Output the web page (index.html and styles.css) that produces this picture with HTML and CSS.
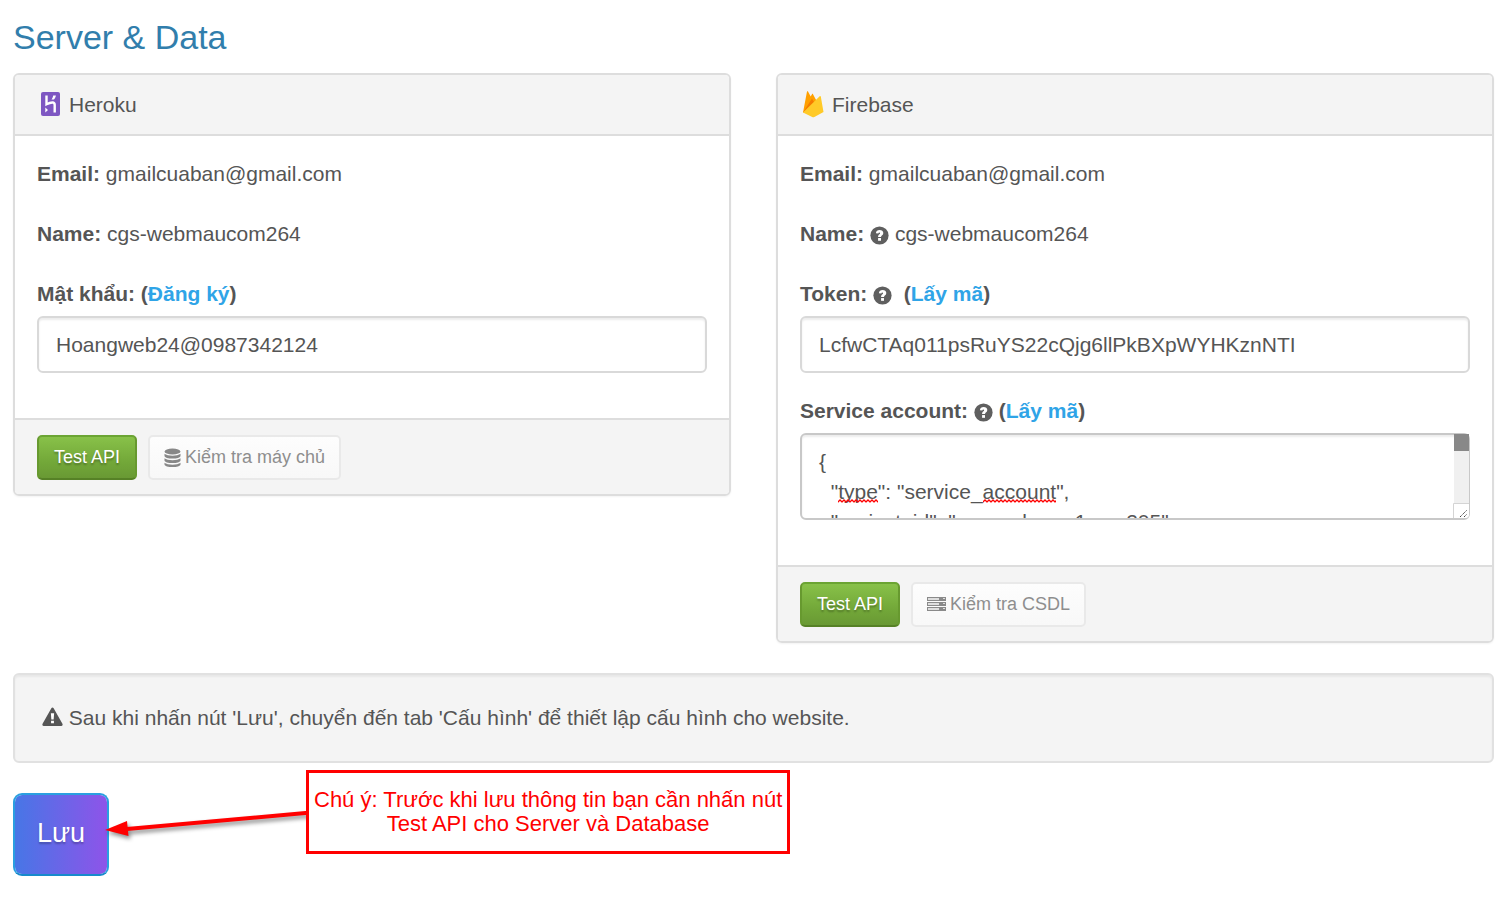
FILE: index.html
```html
<!DOCTYPE html>
<html lang="vi">
<head>
<meta charset="utf-8">
<title>Server &amp; Data</title>
<link rel="stylesheet" href="styles.css">
</head>
<body>
<svg class="sprite" aria-hidden="true">
  <symbol id="help" viewBox="0 0 20 20">
    <circle cx="10" cy="10" r="9.6" fill="#5f5f5f"/>
    <path d="M6.200 7.600C6.400 5.300 8 4.200 10.100 4.200c2.200 0 3.900 1.200 3.900 3.200 0 2.500-2.400 2.600-2.400 4.300H8.500c0-2.700 2.100-2.800 2.100-4 0-.5-.3-.8-.8-.8-.6 0-.9.400-1 1.100z" fill="#fff"/>
    <path d="M8.500 12.700h3.100v2.900H8.500z" fill="#fff"/>
  </symbol>
  <pattern id="squiggle" width="4" height="4" patternUnits="userSpaceOnUse">
    <path d="M-1 3.500L0 3L2 1L4 3L5 3.500" fill="none" stroke="#f00" stroke-width="1.300"/>
  </pattern>
</svg>
<form class="page">
  <h1 class="title">Server &amp; Data</h1>
  <div class="columns">
    <section class="panel">
      <header class="panel-head">
        <svg class="brand" viewBox="0 1 26 28" aria-hidden="true">
          <rect x="4" y="2" width="19" height="24" rx="2" fill="#7e57c2"/>
          <path d="M9.500 5.500V14.300C12 13 14 12.200 16 12.500c1.300.2 1.700 1 1.700 2.500v7.500" fill="none" stroke="#fff" stroke-width="2.400"/>
          <path d="M8.300 17.500v5l2.700-2.500zM16.200 5.500h2.700c-.2 1.500-.8 2.700-1.900 4h-2.500c1-1.200 1.500-2.500 1.700-4z" fill="#fff"/>
        </svg>
        <h2 class="panel-name">Heroku</h2>
      </header>
      <div class="panel-body">
        <p class="row"><b>Email:</b> gmailcuaban@gmail.com</p>
        <p class="row"><b>Name:</b> cgs-webmaucom264</p>
        <div class="field">
          <div class="label"><label for="password">Mật khẩu:</label> (<a href="#signup">Đăng ký</a>)</div>
          <input class="control" id="password" type="text" value="Hoangweb24@0987342124">
        </div>
      </div>
      <footer class="panel-foot">
        <button class="btn btn-green" type="button">Test API</button>
        <button class="btn btn-plain" type="button">
          <svg class="icon-db" viewBox="0 0 17 20" aria-hidden="true">
            <ellipse cx="8.500" cy="3.500" rx="8" ry="3"/>
            <path d="M.5 5.700c3 2.600 13 2.600 16 0v2.200c0 3.400-16 3.400-16 0zM.5 10.200c3 2.600 13 2.600 16 0v2.200c0 3.400-16 3.400-16 0zM.5 14.700c3 2.600 13 2.600 16 0v1.800c0 3.400-16 3.400-16 0z"/>
          </svg>Kiểm tra máy chủ</button>
      </footer>
    </section>

    <section class="panel">
      <header class="panel-head">
        <svg class="brand" viewBox="0 1 26 28" aria-hidden="true">
          <path d="M3 22.500L7 1.500c.1-.5.800-.5 1 0l2.700 5 1.300-2.300c.3-.5.800-.5 1 0l8 15z" fill="#ffa000"/>
          <path d="M3 22.500L12 8.500l3 5.500z" fill="#f57c00"/>
          <path d="M3 22.500L19.700 6.300c.4-.4 1-.2 1.100.3L23.500 22l-9.100 5c-.7.400-1.500.400-2.200 0z" fill="#ffca28"/>
        </svg>
        <h2 class="panel-name">Firebase</h2>
      </header>
      <div class="panel-body">
        <p class="row"><b>Email:</b> gmailcuaban@gmail.com</p>
        <p class="row"><b>Name:</b> <svg class="help" aria-hidden="true"><use href="#help"/></svg> cgs-webmaucom264</p>
        <div class="field">
          <div class="label"><label for="token">Token:</label> <svg class="help" aria-hidden="true"><use href="#help"/></svg>&nbsp; (<a href="#token">Lấy mã</a>)</div>
          <input class="control" id="token" type="text" value="LcfwCTAq011psRuYS22cQjg6llPkBXpWYHKznNTI">
        </div>
        <div class="field">
          <div class="label"><label for="account">Service account:</label> <svg class="help" aria-hidden="true"><use href="#help"/></svg> (<a href="#account">Lấy mã</a>)</div>
          <div class="area">
            <textarea class="control control-area" id="account" spellcheck="false">{
  "type": "service_account",
  "project_id": "cgs-webmau1com205"
}</textarea>
            <svg class="wave wave-type" aria-hidden="true"><rect width="100%" height="4" fill="url(#squiggle)"/></svg>
            <svg class="wave wave-account" aria-hidden="true"><rect width="100%" height="4" fill="url(#squiggle)"/></svg>
            <div class="scroll" aria-hidden="true">
              <div class="scroll-thumb"></div>
              <svg class="scroll-grip" viewBox="0 0 16 15">
                <path d="M.5 15V.5H16" fill="none" stroke="#d4d4d4"/>
                <path d="M7 14L14 7M11 14l3-3" stroke="#444" stroke-dasharray="1.400 .6"/>
              </svg>
            </div>
          </div>
        </div>
      </div>
      <footer class="panel-foot">
        <button class="btn btn-green" type="button">Test API</button>
        <button class="btn btn-plain" type="button">
          <svg class="icon-server" viewBox="0 0 19 18" aria-hidden="true">
            <path d="M0 1h19v4H0zM0 6h19v4H0zM0 11h19v4H0z"/>
            <path d="M1 2h11v2H1zM1 7h11v2H1zM1 12h11v2H1zM16 2h2v1h-2zM16 7h2v1h-2zM16 12h2v1h-2z" fill="#ddd"/>
          </svg>Kiểm tra CSDL</button>
      </footer>
    </section>
  </div>

  <div class="well">
    <svg class="icon-warn" viewBox="0 0 22 20" aria-hidden="true">
      <path d="M9.800.8c.6-1 1.800-1 2.400 0l9.200 16.400c.6 1.100 0 2.300-1.200 2.300H1.800C.6 19.500 0 18.300.600 17.200z" fill="#555"/>
      <path d="M9.300 6h3.400l-.5 6.500H9.800zM9.500 13.800h3v2.700h-3z" fill="#fff"/>
    </svg>
    Sau khi nhấn nút 'Lưu', chuyển đến tab 'Cấu hình' để thiết lập cấu hình cho website.
  </div>

  <div class="actions">
    <button class="save" type="submit">Lưu</button>
    <svg class="arrow" viewBox="0 0 206 40" aria-hidden="true">
      <path d="M206 9.500L22 26" stroke="#f00" stroke-width="4"/>
      <path d="M0 27L22 18L23.500 33z" fill="#f00"/>
    </svg>
    <div class="note">Chú ý: Trước khi lưu thông tin bạn cần nhấn nút<br>Test API cho Server và Database</div>
  </div>
</form>
</body>
</html>
```
FILE: styles.css
```css
* {
  box-sizing: border-box;
}

body {
  margin: 0;
  background: #fff;
  color: #555;
  font: 21px/30px "Liberation Sans", Arial, sans-serif;
}

.sprite {
  position: absolute;
  width: 0;
  height: 0;
}

.page {
  padding: 15px 8px 20px 13px;
}

.title {
  margin: 0 0 14px;
  color: #317eac;
  font-size: 34px;
  font-weight: 400;
  line-height: 44px;
}

a {
  color: #2fa4e7;
  text-decoration: none;
}

.columns {
  display: grid;
  grid-template-columns: 1fr 1fr;
  gap: 45px;
  align-items: start;
  margin-bottom: 30px;
}

.panel {
  border: 2px solid #ddd;
  border-radius: 6px;
  box-shadow: 0 1px 2px rgba(0, 0, 0, 0.05);
  overflow: hidden;
}

.panel-head {
  display: flex;
  align-items: center;
  gap: 6px;
  padding: 15px 22px 14px;
  border-bottom: 2px solid #ddd;
  background: #f4f4f4;
}

.brand {
  width: 26px;
  height: 28px;
  overflow: visible;
}

.panel-name {
  margin: 0;
  font-size: 21px;
  font-weight: 400;
}

.panel-body {
  padding: 23px 22px 22px;
}

.row {
  margin: 0 0 30px;
}

.field {
  margin-bottom: 23px;
}

.label {
  margin-bottom: 7px;
  font-weight: 700;
}

.help {
  width: 19px;
  height: 19px;
  vertical-align: -4px;
}

.control {
  display: block;
  width: 100%;
  height: 57px;
  padding: 12px 17px;
  border: 2px solid #d9d9d9;
  border-radius: 6px;
  background: #fff;
  box-shadow: inset 0 2px 2px rgba(0, 0, 0, 0.075);
  color: #555;
  font: inherit;
}

.area {
  position: relative;
}

.control-area {
  height: 87px;
  border-color: #c8c8c8;
  resize: none;
  scrollbar-width: none;
}

.wave {
  position: absolute;
  top: 66px;
  height: 4px;
  pointer-events: none;
}

.wave-type {
  left: 38px;
  width: 40px;
}

.wave-account {
  left: 183px;
  width: 73px;
}

.scroll {
  position: absolute;
  top: 1px;
  right: 1px;
  bottom: 2px;
  display: flex;
  flex-direction: column;
  justify-content: space-between;
  width: 15px;
  border-radius: 0 5px 4px 0;
  background: #f0f0f0;
}

.scroll-thumb {
  height: 17px;
  background: #888;
}

.scroll-grip {
  width: 16px;
  height: 15px;
  margin-left: -1px;
  border-radius: 0 0 4px 0;
  background: #fff;
}

.panel-foot {
  display: flex;
  gap: 11px;
  padding: 15px 22px 14px;
  border-top: 2px solid #ddd;
  background: #f4f4f4;
}

.btn {
  display: flex;
  align-items: center;
  height: 45px;
  padding: 0 15px;
  border: 2px solid;
  border-radius: 5px;
  font: 18px/27px "Liberation Sans", Arial, sans-serif;
}

.btn-green {
  border-color: #6ba433 #67992f #568126;
  background: linear-gradient(#88c149, #73a839 60%, #699934);
  color: #fff;
  text-shadow: 0 2px 2px rgba(0, 0, 0, 0.3);
}

.btn-plain {
  gap: 4px;
  padding: 0 14px;
  border-color: #e9e9e9;
  background: linear-gradient(#fdfdfd, #f8f8f8);
  color: #8e8e8e;
}

.icon-db {
  width: 17px;
  height: 20px;
  fill: #888;
}

.icon-server {
  width: 19px;
  height: 18px;
  fill: #8a8a8a;
}

.well {
  padding: 28px 27px;
  border: 2px solid #e1e1e1;
  border-radius: 6px;
  background: #f4f4f4;
  box-shadow: inset 0 2px 2px rgba(0, 0, 0, 0.05);
}

.icon-warn {
  width: 21px;
  height: 20px;
  vertical-align: -2px;
}

.actions {
  position: relative;
  margin-top: 30px;
}

.save {
  display: block;
  height: 83px;
  padding: 0 22px 3px;
  border: 2px solid #2a9fe0;
  border-bottom-color: #178acc;
  border-radius: 9px;
  background: linear-gradient(90deg, #4776e6, #8e54e9) padding-box;
  color: #fff;
  font: 27px/36px "Liberation Sans", Arial, sans-serif;
  text-shadow: 0 2px 2px rgba(0, 0, 0, 0.25);
}

.arrow {
  position: absolute;
  left: 92px;
  top: 10px;
  width: 206px;
  height: 40px;
  filter: drop-shadow(2px 3px 2px rgba(0, 0, 0, 0.45));
}

.note {
  position: absolute;
  left: 293px;
  top: -23px;
  padding: 15px 5px;
  border: 3px solid #f00;
  background: #fff;
  color: #f00;
  font-size: 22px;
  line-height: 24px;
  text-align: center;
  white-space: nowrap;
}
```
